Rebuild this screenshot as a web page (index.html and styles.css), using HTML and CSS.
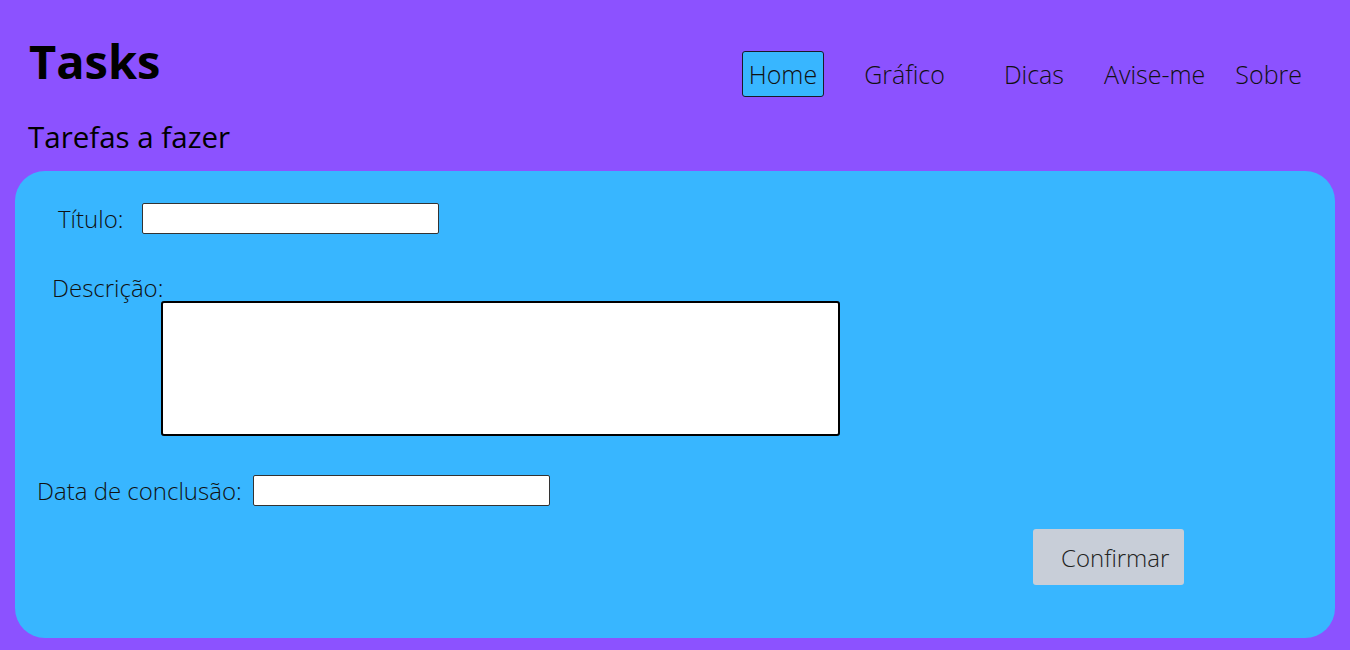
FILE: index.html
```html
<!DOCTYPE html>
<html lang="pt-BR">
<head>
<meta charset="utf-8">
<title>Tasks</title>
<link rel="stylesheet" href="styles.css">
</head>
<body>
<header class="topbar">
  <h1 class="brand">Tasks</h1>
  <nav class="nav">
    <a class="nav-link active" href="#">Home</a>
    <a class="nav-link nl-grafico" href="#">Gráfico</a>
    <a class="nav-link nl-dicas" href="#">Dicas</a>
    <a class="nav-link nl-avise" href="#">Avise-me</a>
    <a class="nav-link nl-sobre" href="#">Sobre</a>
  </nav>
</header>
<h2 class="subtitle">Tarefas a fazer</h2>
<main class="card">
  <form class="task-form">
    <div class="row row-title">
      <label class="lbl" for="titulo">Título:</label>
      <input class="field" id="titulo" type="text">
    </div>
    <label class="lbl lbl-desc" for="descricao">Descrição:</label>
    <textarea class="area" id="descricao"></textarea>
    <div class="row row-date">
      <label class="lbl" for="data">Data de conclusão:</label>
      <input class="field" id="data" type="text">
    </div>
    <button class="btn" type="button">Confirmar</button>
  </form>
</main>
</body>
</html>
```

FILE: styles.css
```css
* { box-sizing: border-box; }

body {
  margin: 0;
  background: #8c52ff;
  font-family: "Open Sans", "Liberation Sans", sans-serif;
  color: #000;
  height: 650px;
  overflow: hidden;
}

.topbar {
  display: flex;
  justify-content: space-between;
  align-items: flex-start;
  padding: 29px 0 0 29px;
}

.brand {
  margin: 0;
  font-size: 47px;
  font-weight: 700;
  line-height: 65px;
}

.nav {
  display: flex;
  margin-top: 22px;
  margin-right: 41px;
}

.nav-link {
  font-size: 25px;
  font-weight: 300;
  color: #111;
  text-decoration: none;
  padding: 5px 6px;
  border: 1px solid transparent;
  border-radius: 3px;
  line-height: 34px;
}

.nav-link.active {
  background: #38b6ff;
  border-color: #1a1a2a;
}

.nl-grafico { margin-left: 33px; }
.nl-dicas { margin-left: 45px; }
.nl-avise { margin-left: 26px; }
.nl-sobre { margin-left: 16px; }

.subtitle {
  margin: 21px 0 0 28px;
  font-size: 29.5px;
  font-weight: 400;
  line-height: 38px;
}

.card {
  margin: 15px 15px 0;
  height: 467px;
  background: #38b6ff;
  border-radius: 30px;
}

.task-form {
  display: flex;
  flex-direction: column;
  align-items: flex-start;
  padding-top: 31px;
}

.row {
  display: flex;
  align-items: center;
  height: 33px;
}

.lbl {
  font-size: 24px;
  font-weight: 300;
  color: #111;
  line-height: normal;
}

.row-title { padding-left: 43px; gap: 19px; }
.row-date { padding-left: 22px; gap: 11px; margin-top: 38px; }

.lbl-desc {
  display: block;
  line-height: 26px;
  margin: 40px 0 0 37px;
}

.field {
  width: 297px;
  height: 31px;
  border: 1px solid #333;
  border-radius: 2px;
  background: #fff;
  margin: 0;
}

.area {
  display: block;
  width: 679px;
  height: 135px;
  margin: 0 0 0 146px;
  border: 2px solid #000;
  border-radius: 3px;
  background: #fff;
  resize: none;
}

.btn {
  align-self: flex-end;
  margin: 22px 151px 0 0;
  width: 151px;
  height: 56px;
  padding: 0 16px 0 28px;
  border: none;
  border-radius: 3px;
  background: #c8ced8;
  font-family: "Open Sans", "Liberation Sans", sans-serif;
  font-size: 24px;
  font-weight: 300;
  color: #222;
  text-align: left;
}
```
